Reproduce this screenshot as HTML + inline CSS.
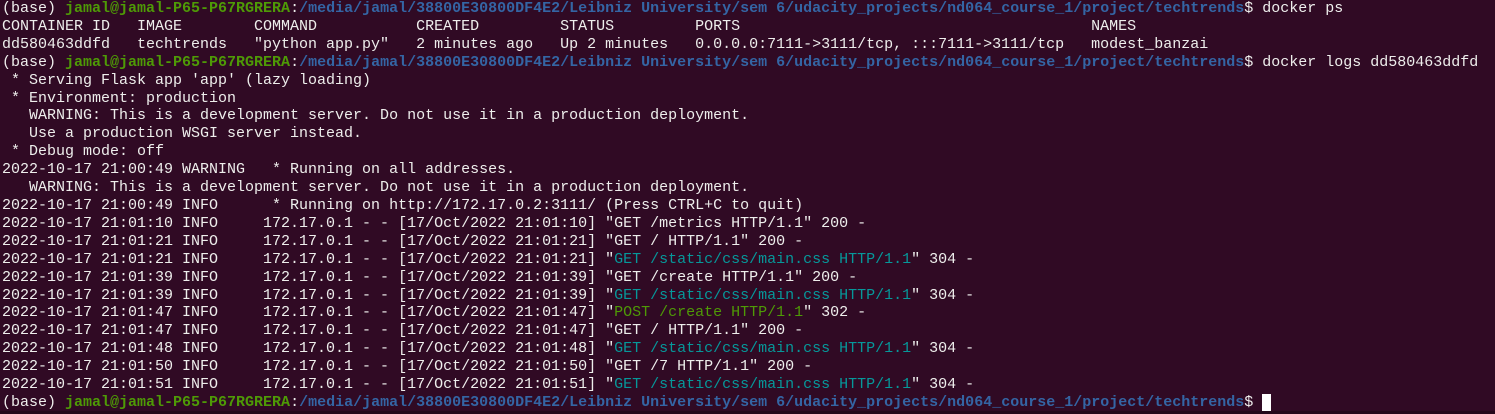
<!DOCTYPE html>
<html><head><meta charset="utf-8"><style>
html,body{margin:0;padding:0;background:#300a24;width:1495px;height:414px;overflow:hidden}
pre{margin:0;padding:0 0 0 2px;font-family:"Liberation Mono",monospace;font-size:15px;line-height:17.9px;color:#eeeeec;white-space:pre}
.g{color:#4e9a06;font-weight:bold}.b{color:#3465a4;font-weight:bold}
.c{color:#06989a}.p{color:#4e9a06}
.cur{background:#fff;color:#fff}
.bar{position:absolute;left:0;right:0;bottom:0;height:3px;background:#24081b}
</style></head><body>
<pre>(base) <span class="g">jamal@jamal-P65-P67RGRERA</span>:<span class="b">/media/jamal/38800E30800DF4E2/Leibniz University/sem 6/udacity_projects/nd064_course_1/project/techtrends</span>$ docker ps
CONTAINER ID   IMAGE        COMMAND           CREATED         STATUS         PORTS                                       NAMES
dd580463ddfd   techtrends   "python app.py"   2 minutes ago   Up 2 minutes   0.0.0.0:7111-&gt;3111/tcp, :::7111-&gt;3111/tcp   modest_banzai
(base) <span class="g">jamal@jamal-P65-P67RGRERA</span>:<span class="b">/media/jamal/38800E30800DF4E2/Leibniz University/sem 6/udacity_projects/nd064_course_1/project/techtrends</span>$ docker logs dd580463ddfd
 * Serving Flask app 'app' (lazy loading)
 * Environment: production
   WARNING: This is a development server. Do not use it in a production deployment.
   Use a production WSGI server instead.
 * Debug mode: off
2022-10-17 21:00:49 WARNING   * Running on all addresses.
   WARNING: This is a development server. Do not use it in a production deployment.
2022-10-17 21:00:49 INFO      * Running on http://172.17.0.2:3111/ (Press CTRL+C to quit)
2022-10-17 21:01:10 INFO     172.17.0.1 - - [17/Oct/2022 21:01:10] "GET /metrics HTTP/1.1" 200 -
2022-10-17 21:01:21 INFO     172.17.0.1 - - [17/Oct/2022 21:01:21] "GET / HTTP/1.1" 200 -
2022-10-17 21:01:21 INFO     172.17.0.1 - - [17/Oct/2022 21:01:21] "<span class="c">GET /static/css/main.css HTTP/1.1</span>" 304 -
2022-10-17 21:01:39 INFO     172.17.0.1 - - [17/Oct/2022 21:01:39] "GET /create HTTP/1.1" 200 -
2022-10-17 21:01:39 INFO     172.17.0.1 - - [17/Oct/2022 21:01:39] "<span class="c">GET /static/css/main.css HTTP/1.1</span>" 304 -
2022-10-17 21:01:47 INFO     172.17.0.1 - - [17/Oct/2022 21:01:47] "<span class="p">POST /create HTTP/1.1</span>" 302 -
2022-10-17 21:01:47 INFO     172.17.0.1 - - [17/Oct/2022 21:01:47] "GET / HTTP/1.1" 200 -
2022-10-17 21:01:48 INFO     172.17.0.1 - - [17/Oct/2022 21:01:48] "<span class="c">GET /static/css/main.css HTTP/1.1</span>" 304 -
2022-10-17 21:01:50 INFO     172.17.0.1 - - [17/Oct/2022 21:01:50] "GET /7 HTTP/1.1" 200 -
2022-10-17 21:01:51 INFO     172.17.0.1 - - [17/Oct/2022 21:01:51] "<span class="c">GET /static/css/main.css HTTP/1.1</span>" 304 -
(base) <span class="g">jamal@jamal-P65-P67RGRERA</span>:<span class="b">/media/jamal/38800E30800DF4E2/Leibniz University/sem 6/udacity_projects/nd064_course_1/project/techtrends</span>$ <span class="cur">&#160;</span></pre>
<div class="bar"></div>
</body></html>
